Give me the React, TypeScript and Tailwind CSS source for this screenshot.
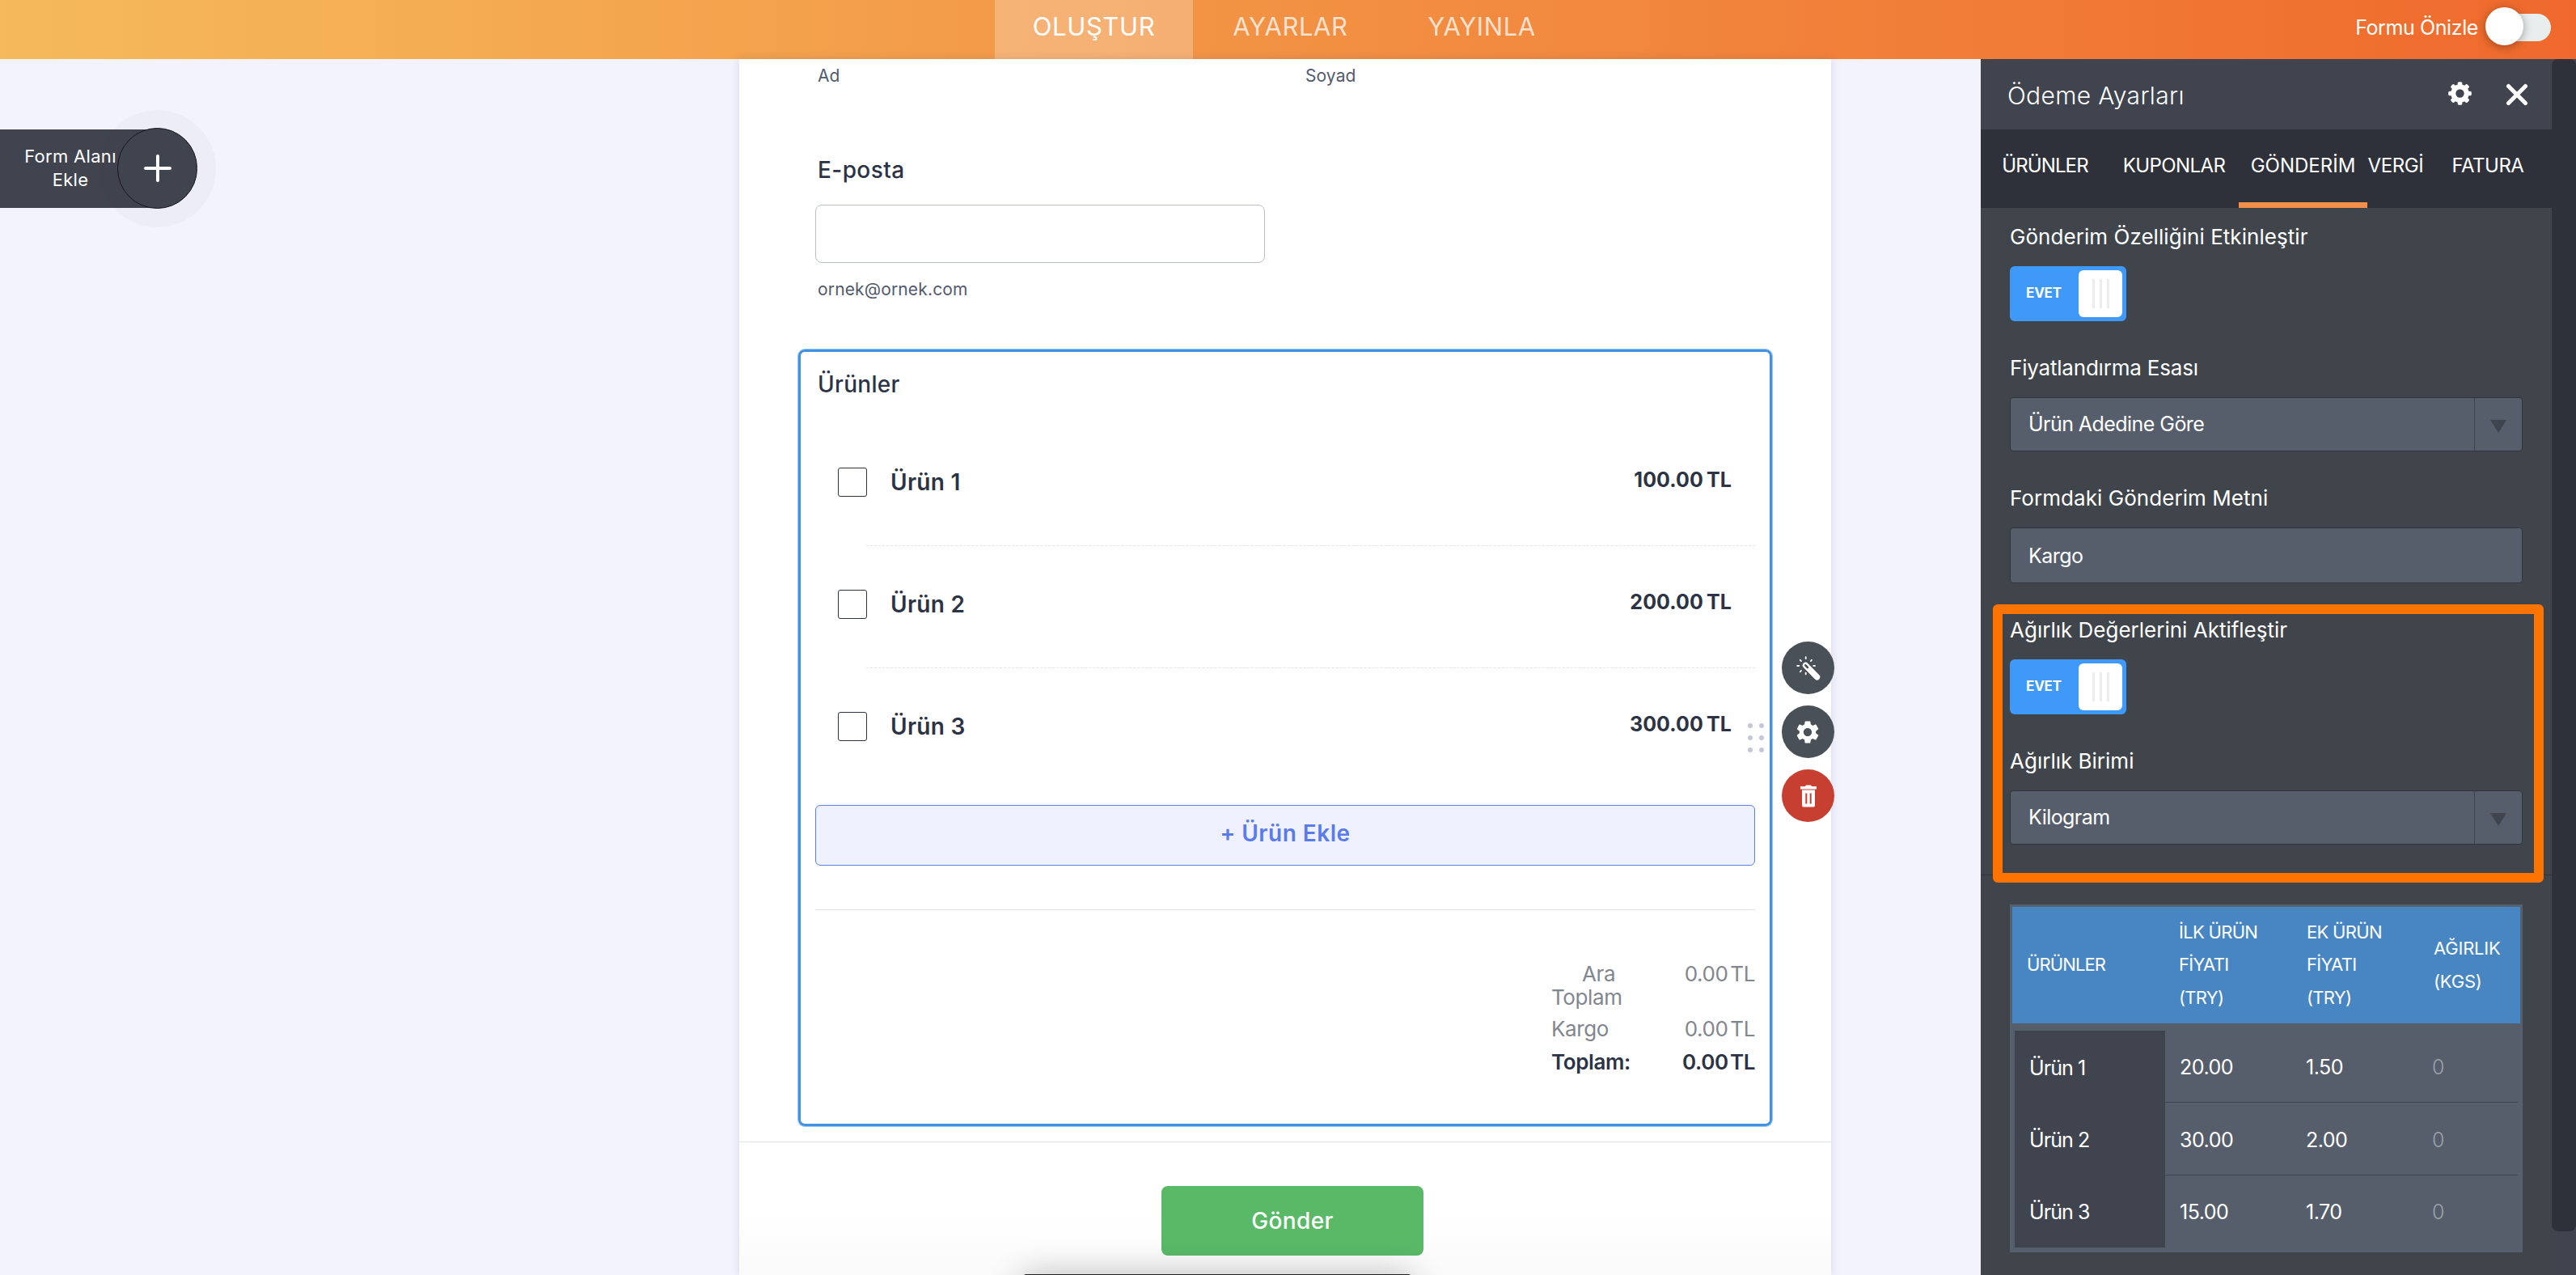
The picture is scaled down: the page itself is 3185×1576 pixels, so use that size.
import React from 'react';
import clsx from 'clsx';
import { MdSettings } from 'react-icons/md';

const topTabs = [
  { label: 'OLUŞTUR', className: 'w-[245px] bg-white/25 text-white' },
  { label: 'AYARLAR', className: 'w-[241px] text-white/75' },
  { label: 'YAYINLA', className: 'w-[232px] text-white/75' },
];

const panelTabs = [
  { label: 'ÜRÜNLER', className: 'w-[159px] tracking-[-0.9px]' },
  { label: 'KUPONLAR', className: 'w-[160px] tracking-[-0.6px]' },
  { label: 'GÖNDERİM', className: 'w-[159px] border-b-[7px] border-[#f28f4a] pt-[7px]' },
  { label: 'VERGİ', className: 'w-[70px] tracking-[-0.4px]' },
  { label: 'FATURA', className: 'w-[158px] tracking-[-0.5px]' },
];

const products = [
  { name: 'Ürün 1', price: '100.00 TL', first: '20.00', extra: '1.50' },
  { name: 'Ürün 2', price: '200.00 TL', first: '30.00', extra: '2.00' },
  { name: 'Ürün 3', price: '300.00 TL', first: '15.00', extra: '1.70' },
];

export default function App() {
  return (
    <div className="relative h-[1576px] w-[3185px] overflow-hidden bg-[#f3f3fe] font-['Inter',sans-serif]">
      <TopBar />
      <div className="flex h-[1503px]">
        <div className="relative w-[914px] shrink-0">
          <AddFieldButton />
        </div>
        <FormSheet />
        <div className="w-[185px] shrink-0" />
        <SettingsPanel />
        <div className="w-[30px] shrink-0 bg-[#40444f]">
          <div className="h-[1449px] rounded-[8px] bg-[#2f313a]" />
        </div>
      </div>
      {/* Window peeking in from the bottom edge */}
      <div className="absolute left-[1265px] top-[1575px] h-10 w-[480px] rounded-[4px] bg-[#222] shadow-[0_0_40px_rgba(0,0,0,0.25)]" />
    </div>
  );
}

function TopBar() {
  return (
    <div className="flex h-[73px] justify-between bg-linear-to-r from-[#f5ba5a] via-[#f29143] to-[#ef692c]">
      <div className="ml-[1230px] flex text-[31px] tracking-[0.6px]">
        {topTabs.map((tab) => (
          <div key={tab.label} className={clsx('flex items-center justify-center pb-[7px]', tab.className)}>
            {tab.label}
          </div>
        ))}
      </div>
      <div className="mr-[31px] flex items-center text-white">
        <span className="mr-[9px] pb-[4px] text-[25px] tracking-[-0.4px]">Formu Önizle</span>
        <div className="relative mb-[8px] h-[47px] w-[81px]">
          <div className="absolute right-0 top-[8px] h-[34px] w-[60px] rounded-full bg-[#e8eded]" />
          <div className="absolute left-0 top-0 h-[47px] w-[47px] rounded-full bg-white shadow-[0_2px_12px_rgba(0,0,0,0.35)]" />
        </div>
      </div>
    </div>
  );
}

function AddFieldButton() {
  return (
    <div className="absolute left-0 top-[63px] h-[144px] w-[268px]">
      <div className="absolute left-0 top-[24px] h-[97px] w-[195px] bg-[#40444f]" />
      <div className="absolute left-[122px] top-0 h-[145px] w-[145px] rounded-full bg-[rgba(60,60,50,0.03)]" />
      <div className="absolute left-[27px] top-[43px] w-[120px] text-center text-[22px] leading-[29px] tracking-[0.3px] text-white">
        Form Alanı Ekle
      </div>
      <div className="absolute left-[145px] top-[22px] flex h-[100px] w-[99px] items-center justify-center rounded-full border border-[#17181c] bg-[#40444f]">
        <svg width="36" height="36" viewBox="0 0 36 36" stroke="#fff" strokeWidth="4" strokeLinecap="round">
          <path d="M18 3v30M3 18h30" />
        </svg>
      </div>
    </div>
  );
}

function FormSheet() {
  return (
    <div className="relative w-[1350px] shrink-0 bg-linear-to-b from-white from-95% to-[#fafafa] pt-[7px] text-[#2c3345] shadow-[0_0_10px_rgba(80,80,140,0.18)]">
      <div className="flex pl-[97px] text-[21px] leading-7 tracking-[0.1px] text-[#535a6e]">
        <div className="w-[603px]">Ad</div>
        <div>Soyad</div>
      </div>

      <div className="mt-[84px] pl-[97px] text-[28px] font-medium leading-9 tracking-[0.4px]">E-posta</div>
      <div className="ml-[94px] mt-[25px] h-[72px] w-[556px] rounded-[8px] border border-[#b8bdc9] bg-white" />
      <div className="mt-[19px] pl-[97px] text-[21px] leading-7 tracking-[0.15px] text-[#535a6e]">ornek@ornek.com</div>

      <div className="ml-[73px] mt-[60px] h-[960px] w-[1204px] rounded-[8px] border-[3px] border-[#4192e0] px-[18px] pt-[22px] ring-1 ring-[#9cc6ef]">
        <div className="pl-[3px] text-[28px] font-medium leading-9 tracking-[0.3px]">Ürünler</div>
        <div className="mt-[31px]">
          {products.map((product, i) => (
            <div key={product.name} className="h-[151px]">
              <div className="flex h-[150px] pl-[28px] pr-[29px] pt-[54px]">
                <div className="h-9 w-9 rounded-[3px] border border-[#2c3345]" />
                <div className="ml-[29px] text-[28px] font-semibold leading-9 tracking-[0.3px]">{product.name}</div>
                <div className="-mt-[3px] ml-auto text-[25px] font-bold leading-9 tracking-[0.1px] [word-spacing:-2px]">{product.price}</div>
              </div>
              {i < 2 && <div className="ml-[63px] border-t border-dashed border-[#e3e3e8]" />}
            </div>
          ))}
        </div>
        <div className="mt-[18px] flex h-[75px] items-center justify-center rounded-[6px] border border-[#5a7eea] bg-[#eff1fe] pb-[5px] text-[28px] font-semibold tracking-[0.5px] text-[#5a7bec]">
          + Ürün Ekle
        </div>
        <div className="mt-[54px] border-t border-[#e3e5ed]" />
        <Totals />
      </div>

      <div className="mt-[19px] border-t border-[#e3e5ed]" />
      <div className="ml-[522px] mt-[54px] flex h-[86px] w-[324px] items-center justify-center rounded-[8px] bg-[#59b967] pb-px text-[28px] font-medium tracking-[0.4px] text-white">
        Gönder
      </div>

      {/* Drag handle */}
      <div className="absolute left-[1247px] top-[821px] grid grid-cols-2 gap-x-2 gap-y-[9px]">
        {[0, 1, 2, 3, 4, 5].map((dot) => (
          <div key={dot} className="h-[6px] w-[6px] rounded-full bg-[#c3c8d8]" />
        ))}
      </div>

      <div className="absolute left-[1289px] top-[720px] z-10 flex flex-col gap-[14px] text-white">
        <div className="flex h-[65px] w-[65px] items-center justify-center rounded-full bg-[#4a5057]">
          <WandIcon />
        </div>
        <div className="flex h-[65px] w-[65px] items-center justify-center rounded-full bg-[#4a5057]">
          <MdSettings className="h-[34px] w-[34px] -translate-x-px" />
        </div>
        <div className="flex h-[65px] w-[65px] items-center justify-center rounded-full bg-[#c63f31]">
          <TrashIcon />
        </div>
      </div>
    </div>
  );
}

function Totals() {
  return (
    <div className="ml-auto mt-[64px] w-[252px] text-[26px] leading-[29px] tracking-[-0.4px] text-[#82868f]">
      <div className="flex justify-between">
        <div className="w-[100px] indent-[38px]">Ara Toplam</div>
        <div className="[word-spacing:-4px]">0.00 TL</div>
      </div>
      <div className="mt-[10px] flex justify-between">
        <div>Kargo</div>
        <div className="[word-spacing:-4px]">0.00 TL</div>
      </div>
      <div className="mt-[12px] flex justify-between font-semibold text-[#2c3345]">
        <div>Toplam:</div>
        <div className="[word-spacing:-4px]">0.00 TL</div>
      </div>
    </div>
  );
}

function SettingsPanel() {
  return (
    <div className="w-[706px] shrink-0 bg-[#40454c] text-white">
      <div className="flex h-[87px] items-center bg-[#40444f] pl-[33px] pr-[29px]">
        <div className="pt-[3px] text-[30px] font-light tracking-[0.35px]">Ödeme Ayarları</div>
        <GearIcon />
        <svg className="ml-[42px]" width="28" height="28" viewBox="0 0 28 28" stroke="#fff" strokeWidth="5" strokeLinecap="round">
          <path d="M3.5 3.5l21 21M24.5 3.5l-21 21" />
        </svg>
      </div>
      <div className="flex h-[97px] bg-[#2f313a] text-[24px]">
        {panelTabs.map((tab) => (
          <div key={tab.label} className={clsx('flex items-center justify-center', tab.className)}>
            <span className="pb-[8px]">{tab.label}</span>
          </div>
        ))}
      </div>

      <div className="relative h-[1319px] px-[36px] pt-[20px]">
        <Field label="Gönderim Özelliğini Etkinleştir" className="h-[162px] tracking-[0.05px]">
          <Toggle />
        </Field>
        <Field label="Fiyatlandırma Esası" className="h-[161px] tracking-[-0.2px]">
          <Select value="Ürün Adedine Göre" />
        </Field>
        <Field label="Formdaki Gönderim Metni" className="h-[163px] tracking-[0.05px]">
          <div className="flex h-[69px] items-center rounded-[4px] border border-[#30343c] bg-[#565e6c] pl-[22px] pt-[3px] text-[25px] tracking-[-0.55px]">
            Kargo
          </div>
        </Field>
        <Field label="Ağırlık Değerlerini Aktifleştir" className="h-[162px]">
          <Toggle />
        </Field>
        <Field label="Ağırlık Birimi" className="h-[156px]">
          <Select value="Kilogram" />
        </Field>
        <div className="-mx-[36px] border-t border-[#30343c]" />
        <ShippingTable />
        {/* Highlight around the weight options */}
        <div className="absolute left-[15px] top-[490px] h-[344px] w-[681px] rounded-[6px] border-[12px] border-[#ff7300]" />
      </div>
    </div>
  );
}

function Field({ label, className, children }: { label: string; className: string; children: React.ReactNode }) {
  return (
    <div className={className}>
      <div className="mb-[20px] text-[26px] leading-8">{label}</div>
      {children}
    </div>
  );
}

function Toggle() {
  return (
    <div className="flex h-[68px] w-[144px] items-center justify-between rounded-[6px] bg-[#3e99f8] pl-[20px] pr-[5px]">
      <span className="pb-px text-[17px] font-bold tracking-[-0.2px]">EVET</span>
      <div className="flex h-[58px] w-[54px] items-center justify-center gap-[6px] rounded-[6px] bg-white">
        <div className="h-9 w-[3px] bg-[#ececec]" />
        <div className="h-9 w-[3px] bg-[#ececec]" />
        <div className="h-9 w-[3px] bg-[#ececec]" />
      </div>
    </div>
  );
}

function Select({ value }: { value: string }) {
  return (
    <div className="flex h-[67px] items-stretch rounded-[4px] border border-[#30343c] bg-[#565e6c] text-[25px] tracking-[-0.55px]">
      <div className="flex flex-1 items-center pl-[22px] pt-px">{value}</div>
      <div className="flex w-[59px] items-center justify-center border-l border-[#40444f] pt-[5px]">
        <svg width="20" height="16" viewBox="0 0 20 16" fill="#40444f">
          <path d="M0 0h20L10 16z" />
        </svg>
      </div>
    </div>
  );
}

function ShippingTable() {
  return (
    <div className="mt-[36px] h-[430px] border-[3px] border-[#57606e] bg-[#565e6c]">
      <div className="flex h-[144px] items-center bg-[#4886c3] pb-px text-[22px] leading-[40.4px] tracking-[-0.7px]">
        <div className="w-[206px] pl-[18px] tracking-[-0.9px]">ÜRÜNLER</div>
        <div className="w-[158px]">İLK ÜRÜN<br />FİYATI<br />(TRY)</div>
        <div className="w-[157px]">EK ÜRÜN<br />FİYATI<br />(TRY)</div>
        <div className="tracking-[-0.2px]">AĞIRLIK<br />(KGS)</div>
      </div>
      <div className="mx-[3px] mt-[9px] text-[25px] tracking-[-0.5px]">
        {products.map((product, i) => (
          <div key={product.name} className="flex h-[89.3px]">
            <div className="flex w-[186px] items-center bg-[#40444f] pl-[18px] pt-[4px] tracking-[-0.9px]">{product.name}</div>
            <div className={clsx('flex flex-1 items-center pl-[18px] pt-[4px]', i < 2 && 'border-b border-[#40444f]')}>
              <div className="w-[156px]">{product.first}</div>
              <div className="w-[156px]">{product.extra}</div>
              <div className="font-light text-[#9ba0a8]">0</div>
            </div>
          </div>
        ))}
      </div>
    </div>
  );
}

function GearIcon() {
  return (
    <svg className="mb-[3px] ml-auto" width="29" height="29" viewBox="-14.5 -14.5 29 29" fill="#fff">
      <circle r="8.2" fill="none" stroke="#fff" strokeWidth="6" />
      {[0, 45, 90, 135, 180, 225, 270, 315].map((angle) => (
        <rect key={angle} x="-2.8" y="-14.3" width="5.6" height="5" rx="1.6" transform={`rotate(${angle})`} />
      ))}
    </svg>
  );
}

function WandIcon() {
  return (
    <svg width="30" height="30" viewBox="0 0 30 30" fill="none" stroke="#fff" strokeLinecap="round">
      <path d="M11.5 11.5L25.6 25.8" strokeWidth="7.4" />
      <path d="M11.3 11.3l2.6 2.7" stroke="#4a5057" strokeWidth="2.6" />
      <path d="M11.7 1.2v2M19 4.8l-1.2 1.3M21.2 12h1.8M1.2 12h2M4.8 4.8l1.2 1.3M6 18l-1.2 1.3M11.7 20.6v1.8" strokeWidth="1.8" />
    </svg>
  );
}

function TrashIcon() {
  return (
    <svg width="20" height="28" viewBox="0 0 20 28">
      <path fill="#fff" d="M0 2h6l1-1.6h6L14 2h6v3.4H0zM2 6.6h16V25a2.6 2.6 0 0 1-2.6 2.6H4.6A2.6 2.6 0 0 1 2 25z" />
      <path stroke="#c63f31" strokeWidth="2" d="M7.3 10.5v13M12.7 10.5v13" />
    </svg>
  );
}
